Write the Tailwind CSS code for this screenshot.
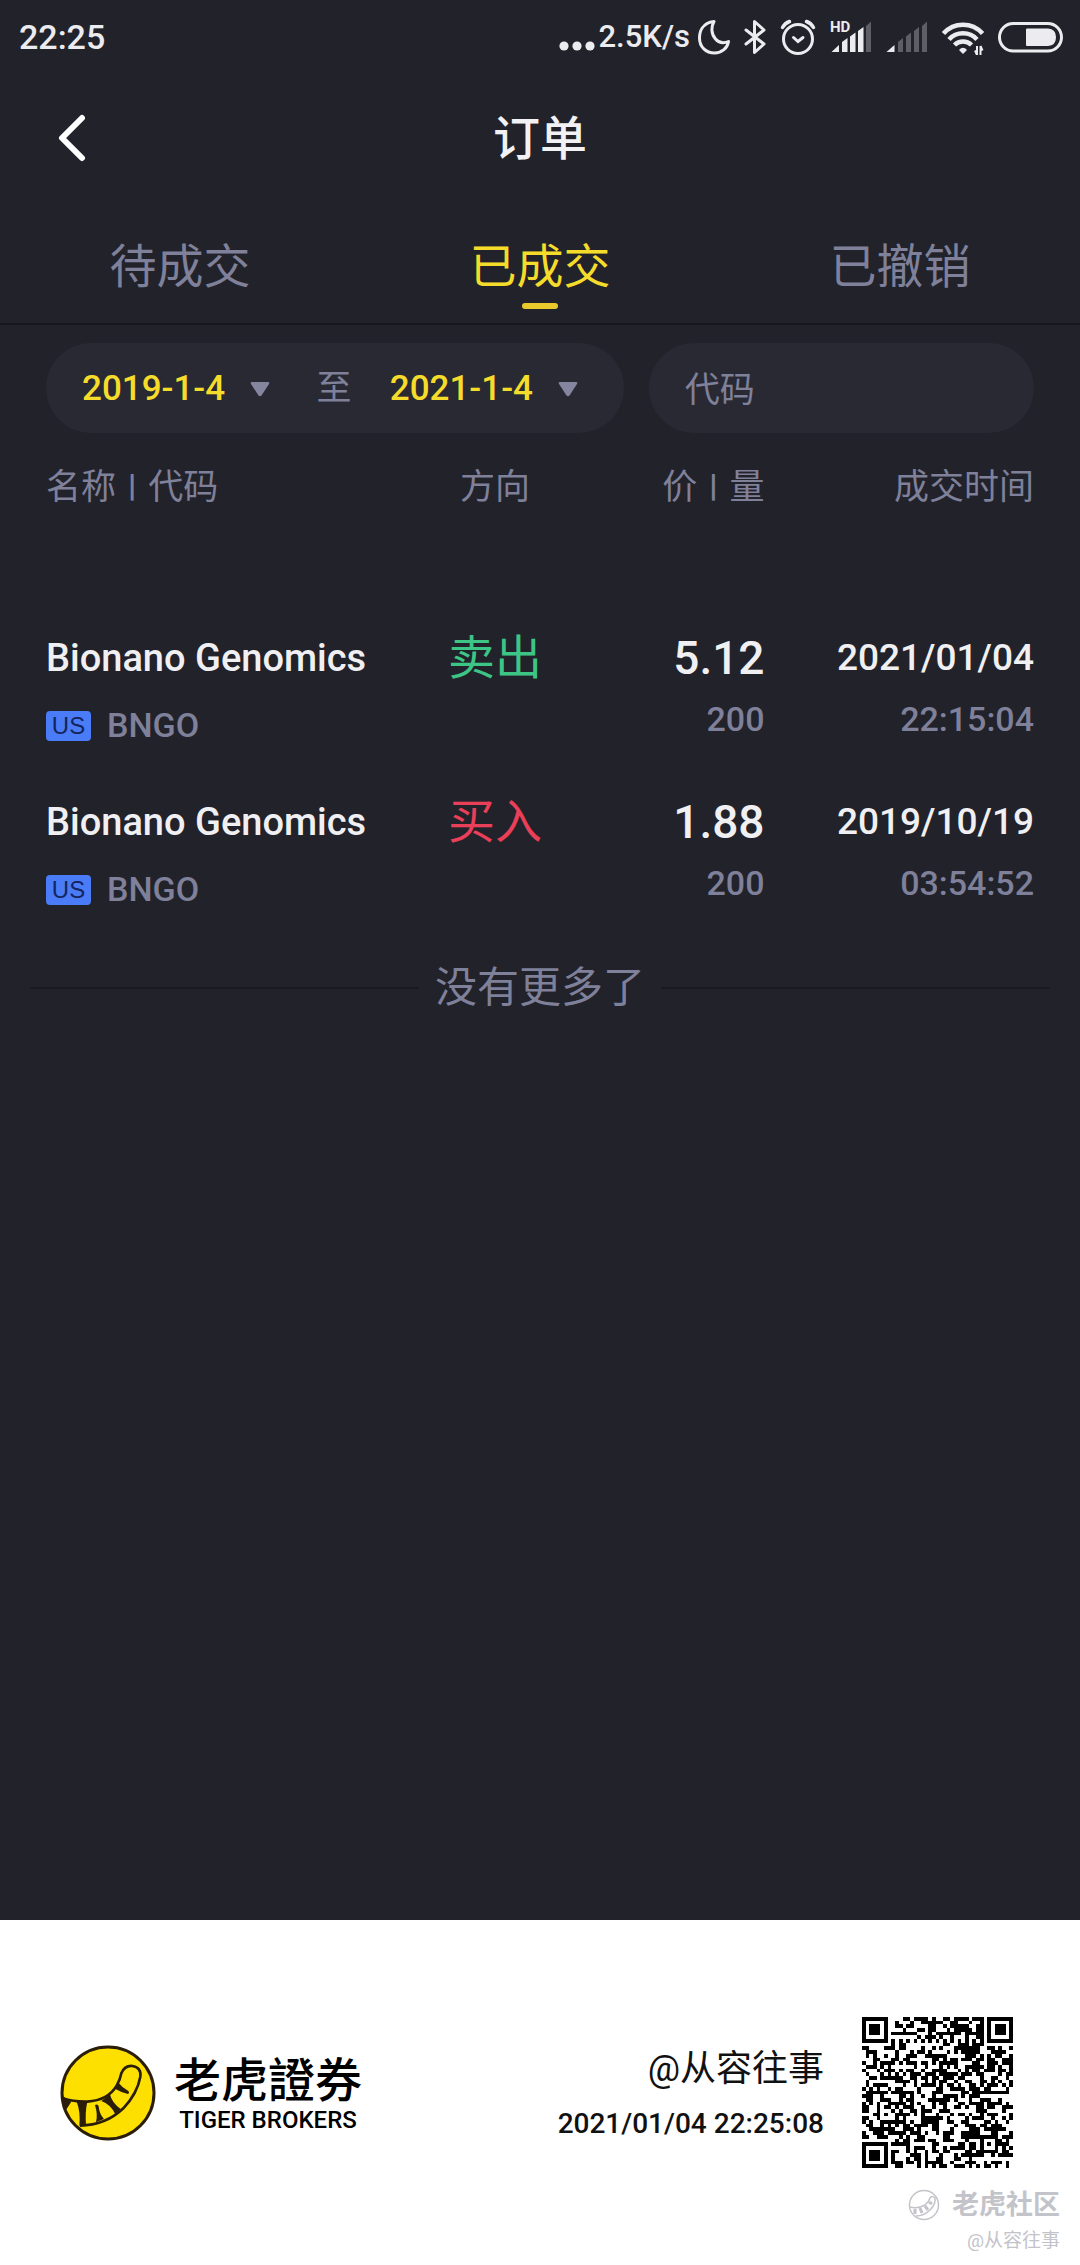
<!DOCTYPE html>
<html lang="zh-CN">
<head>
<meta charset="utf-8">
<meta name="viewport" content="width=device-width, initial-scale=1">
<title>订单</title>
<script src="https://cdn.jsdelivr.net/npm/@tailwindcss/browser@4"></script>
</head>
<body class="flex min-h-screen flex-col bg-[#22222b] font-['Roboto','Noto_Sans_CJK_SC',sans-serif] text-[#7f8099]">

<!-- Status bar -->
<div class="flex h-[74px] items-center justify-between px-4 text-[#ececf0]">
  <span class="pl-[3px] text-[34px] font-medium">22:25</span>
  <div class="flex items-center gap-3.5">
    <div class="flex items-center gap-1">
      <svg class="h-9 w-[36px]" viewBox="0 0 36 36" fill="currentColor" aria-hidden="true"><circle cx="5" cy="27" r="4.6"/><circle cx="18" cy="27" r="4.6"/><circle cx="31" cy="27" r="4.6"/></svg>
      <span class="text-[31px] font-medium">2.5K/s</span>
      <svg class="ml-1 h-9 w-8" viewBox="0 0 32 36" fill="none" stroke="currentColor" stroke-width="3" stroke-linejoin="round" aria-hidden="true"><path d="M16 2.500C4 4 1.500 13 1.500 19C1.500 28 8 34 16.500 34C24 34 29.500 29 30.500 22.500C26 24.500 21 24 17.500 20C13 15 13 8 16 2.500Z"/></svg>
    </div>
    <svg class="h-9 w-[22px]" viewBox="0 0 22 36" fill="none" stroke="currentColor" stroke-width="3" stroke-linejoin="round" stroke-linecap="round" aria-hidden="true"><path d="M2 11L20 25L10.500 33.500V2.500L20 11L2 25"/></svg>
    <svg class="h-9 w-9" viewBox="0 0 36 36" fill="none" stroke="currentColor" stroke-linecap="round" aria-hidden="true"><circle cx="18" cy="20" r="14.500" stroke-width="3"/><path d="M13.500 18.500L18 22.500L23 18.500" stroke-width="3"/><path d="M2.500 8.500Q5 4 9.500 2.500M26.500 2.500Q31 4 33.500 8.500" stroke-width="3.500"/></svg>
    <div class="relative">
      <svg class="h-9 w-[42px]" viewBox="0 0 42 36" fill="currentColor" aria-hidden="true"><path d="M1.500 33L9 26V33ZM12 33V23L17.500 19V33ZM20 33V17.500L25.500 13.500V33ZM28 33V12L33.500 8V33Z"/><path d="M36 33V7L41 2.500V33Z" opacity=".3"/></svg>
      <span class="absolute top-0 left-0 text-[15px] leading-4 font-bold">HD</span>
    </div>
    <svg class="h-9 w-[42px]" viewBox="0 0 42 36" fill="currentColor" aria-hidden="true"><path d="M.5 33L8.500 26V33Z"/><path d="M12 33V23L17 19V33ZM20 33V17.500L25 13.500V33ZM28 33V12L33 8V33ZM36 33V7L41 2.500V33Z" opacity=".3"/></svg>
    <svg class="h-9 w-[42px]" viewBox="0 0 42 36" fill="none" stroke="currentColor" stroke-width="4.500" aria-hidden="true"><path d="M1.500 14.500A26 26 0 0 1 40.500 14.500M7 20.500A19 19 0 0 1 35 20.500M12.500 26A12 12 0 0 1 29.500 26"/><path d="M17 31Q21 26.500 25 31L21 35Z" fill="currentColor" stroke="none"/><path d="M35 27V36M38.500 27V36M33 31.500L35 36M40.500 31.500L38.500 27" stroke-width="2"/></svg>
    <svg class="h-9 w-[66px]" viewBox="0 0 66 36" aria-hidden="true"><rect x="1.500" y="4.500" width="62" height="27.500" rx="13.700" fill="none" stroke="currentColor" stroke-width="3"/><path d="M29 9.500H50Q58 10 58 18Q58 26.500 50 27H29Q28 27 28 26V10.500Q28 9.500 29 9.500Z" fill="currentColor"/></svg>
  </div>
</div>

<!-- Title bar -->
<header class="grid h-32 grid-cols-[1fr_auto_1fr] items-center px-[46px]">
  <a href="#" aria-label="返回" class="justify-self-start px-3 text-white">
    <svg class="h-12 w-7" viewBox="0 0 28 48" fill="none" stroke="currentColor" stroke-width="6" stroke-linecap="round" stroke-linejoin="round"><path d="M24 4L4 24L24 44"/></svg>
  </a>
  <h1 class="text-[47px] leading-none font-medium text-[#f2f2f5]">订单</h1>
</header>

<!-- Tabs -->
<nav class="grid grid-cols-3 border-b-2 border-[#16161e] text-[47px] leading-[70px]">
  <button type="button" class="flex flex-col items-center pt-[30px] pb-4">待成交</button>
  <button type="button" aria-current="page" class="flex flex-col items-center pt-[30px] pb-3.5 text-[#f6dc2a]">已成交<span class="mt-px h-1.5 w-9 rounded-full bg-[#eac92c]"></span></button>
  <button type="button" class="flex flex-col items-center pt-[30px] pb-4">已撤销</button>
</nav>

<main class="flex-1 pb-16">
  <!-- Filters -->
  <form class="mx-[46px] mt-[18px] grid grid-cols-[3fr_2fr] gap-[25px]">
    <div class="flex h-[90px] items-center justify-between rounded-full bg-[#292933] pt-0.5 pr-[46px] pl-9">
      <label class="flex items-center gap-6">
        <select aria-label="开始日期" class="appearance-none text-[35px] font-medium text-[#f6dc2a]"><option>2019-1-4</option></select>
        <svg class="h-4 w-5" viewBox="0 0 20 16" fill="#84859f" aria-hidden="true"><path d="M2 1H18Q20 1 19 3L11.500 14.500Q10 16 8.500 14.500L1 3Q0 1 2 1Z"/></svg>
      </label>
      <span class="pl-2 text-[35px]">至</span>
      <label class="flex items-center gap-6">
        <select aria-label="结束日期" class="appearance-none text-[35px] font-medium text-[#f6dc2a]"><option>2021-1-4</option></select>
        <svg class="h-4 w-5" viewBox="0 0 20 16" fill="#84859f" aria-hidden="true"><path d="M2 1H18Q20 1 19 3L11.500 14.500Q10 16 8.500 14.500L1 3Q0 1 2 1Z"/></svg>
      </label>
    </div>
    <input type="text" aria-label="代码" placeholder="代码" class="h-[90px] w-full min-w-0 rounded-full bg-[#292933] px-9 pt-1 text-[35px] placeholder:text-[#7f8099]">
  </form>

  <!-- Filled orders -->
  <div class="mx-[46px] mt-[30px]">
    <table class="w-full table-fixed">
      <thead>
        <tr class="text-[35px] leading-[50px]">
          <th class="w-4/11 pb-[115px] text-left font-normal">名称<span class="px-3 align-[3px] text-[32px] leading-none font-black">|</span>代码</th>
          <th class="w-2/11 pb-[115px] text-center font-normal">方向</th>
          <th class="w-2/11 pb-[115px] text-right font-normal">价<span class="px-3 align-[3px] text-[32px] leading-none font-black">|</span>量</th>
          <th class="w-3/11 pb-[115px] text-right font-normal">成交时间</th>
        </tr>
      </thead>
      <tbody class="align-top whitespace-nowrap">
        <tr class="h-[164px]">
          <td class="p-0"><div class="text-[38px] leading-[60px] font-medium text-[#f0f0f3]">Bionano Genomics</div><div class="flex h-[75px] items-center gap-4 text-[34px] font-medium"><span class="flex h-[30px] w-[45px] items-center justify-center rounded-sm bg-[#4a7cf8] font-['Liberation_Sans',sans-serif] text-[24px] font-normal text-[#14245c]">US</span>BNGO</div></td>
          <td class="p-0 text-center text-[47px] leading-[60px] text-[#3dc586]">卖出</td>
          <td class="p-0 text-right font-medium"><div class="text-[46px] leading-[60px] text-[#f0f0f3]">5.12</div><div class="text-[34px] leading-[62px]">200</div></td>
          <td class="p-0 text-right font-medium"><div class="text-[37px] leading-[60px] text-[#f0f0f3]">2021/01/04</div><div class="text-[34px] leading-[62px]">22:15:04</div></td>
        </tr>
        <tr class="h-[164px]">
          <td class="p-0"><div class="text-[38px] leading-[60px] font-medium text-[#f0f0f3]">Bionano Genomics</div><div class="flex h-[75px] items-center gap-4 text-[34px] font-medium"><span class="flex h-[30px] w-[45px] items-center justify-center rounded-sm bg-[#4a7cf8] font-['Liberation_Sans',sans-serif] text-[24px] font-normal text-[#14245c]">US</span>BNGO</div></td>
          <td class="p-0 text-center text-[47px] leading-[60px] text-[#ea3f58]">买入</td>
          <td class="p-0 text-right font-medium"><div class="text-[46px] leading-[60px] text-[#f0f0f3]">1.88</div><div class="text-[34px] leading-[62px]">200</div></td>
          <td class="p-0 text-right font-medium"><div class="text-[37px] leading-[60px] text-[#f0f0f3]">2019/10/19</div><div class="text-[34px] leading-[62px]">03:54:52</div></td>
        </tr>
      </tbody>
    </table>
  </div>

  <p class="mx-[30px] flex items-center gap-4 text-[42px] leading-[64px] before:h-0.5 before:flex-1 before:bg-[#1a1a22] after:h-0.5 after:flex-1 after:bg-[#1a1a22]">没有更多了</p>
</main>

<!-- Share footer -->
<footer class="bg-white pt-[97px] pb-2 text-[#111]">
  <div class="flex items-center pr-[67px] pl-[60px]">
    <svg class="size-24" viewBox="58 70 288 288" aria-label="Tiger Brokers" role="img">
      <circle cx="202" cy="214" r="138" fill="#fee000" stroke="#2a1d0a" stroke-width="9"/>
      <path d="M66 230Q100 241 140 240Q202 236 228 192Q238 176 242 155Q252 131 275 133Q303 138 299 165Q290 215 248 260Q195 311 118 312" fill="none" stroke="#2a1d0a" stroke-width="8"/>
      <path d="M64 222L92 240L74 268ZM108 240H140Q133 270 136 310L116 312Q120 270 108 240ZM163 250Q172 246 174 254Q176 278 190 292L166 302Q172 280 163 250ZM182 238L208 218Q213 243 240 262L224 278Q210 248 182 238ZM220 200L232 182Q244 198 262 207Q268 212 262 217Q242 213 220 200Z" fill="#2a1d0a"/>
    </svg>
    <div class="ml-[18px] flex flex-col items-center">
      <span class="font-['Noto_Sans_CJK_TC',sans-serif] text-[47px] leading-[50px] font-medium text-black">老虎證券</span>
      <span class="pt-1 text-[24px] leading-7 font-medium text-black">TIGER BROKERS</span>
    </div>
    <div class="mr-[38px] ml-auto flex flex-col items-end pt-1.5">
      <span class="text-[36px] leading-[56px]">@从容往事</span>
      <span class="text-[28px] leading-[54px] font-medium">2021/01/04 22:25:08</span>
    </div>
    <svg id="qr" class="size-[151px]" viewBox="0 0 41 41" shape-rendering="crispEdges" role="img" aria-label="二维码"><path fill="#000"/></svg>
  </div>
  <div class="mt-[17px] mr-5 flex flex-col items-end text-[#c3c3ca]">
    <div class="flex items-center gap-3">
      <svg class="size-8" viewBox="0 0 32 32" fill="none" stroke="currentColor" stroke-width="1.500" aria-hidden="true"><circle cx="16" cy="16" r="14.500"/><path d="M2 18Q10 20 17 16Q21 13 22 9Q24 6 27 9Q28 15 22 21Q16 27 8 27"/><path d="M7 20V25M12 19L14 24M17 17L20 21M21 13L24 15" stroke-width="3"/></svg>
      <span class="text-[27px] leading-10 font-bold">老虎社区</span>
    </div>
    <span class="text-[19px] leading-8">@从容往事</span>
  </div>
</footer>

<script>
  // Builds a 41x41 code: finder, timing and alignment patterns around a field of data modules.
  const size = 41;
  let seed = 20210104;
  const next = () => (seed = (seed * 1103515245 + 12345) % 2147483648) / 2147483648;
  const ring = (x, y, cx, cy) => Math.max(Math.abs(x - cx), Math.abs(y - cy));
  let d = "";
  for (let y = 0; y < size; y++) {
    for (let x = 0; x < size; x++) {
      let on = next() < 0.5;
      if (x === 6 || y === 6) on = (x + y) % 2 === 0;
      if (ring(x, y, 34, 34) <= 2) on = ring(x, y, 34, 34) !== 1;
      for (const [cx, cy] of [[3, 3], [37, 3], [3, 37]]) {
        const r = ring(x, y, cx, cy);
        if (r <= 4) on = r !== 2 && r !== 4;
      }
      if (on) d += `M${x} ${y}h1v1h-1z`;
    }
  }
  document.querySelector("#qr path").setAttribute("d", d);
</script>
</body>
</html>
